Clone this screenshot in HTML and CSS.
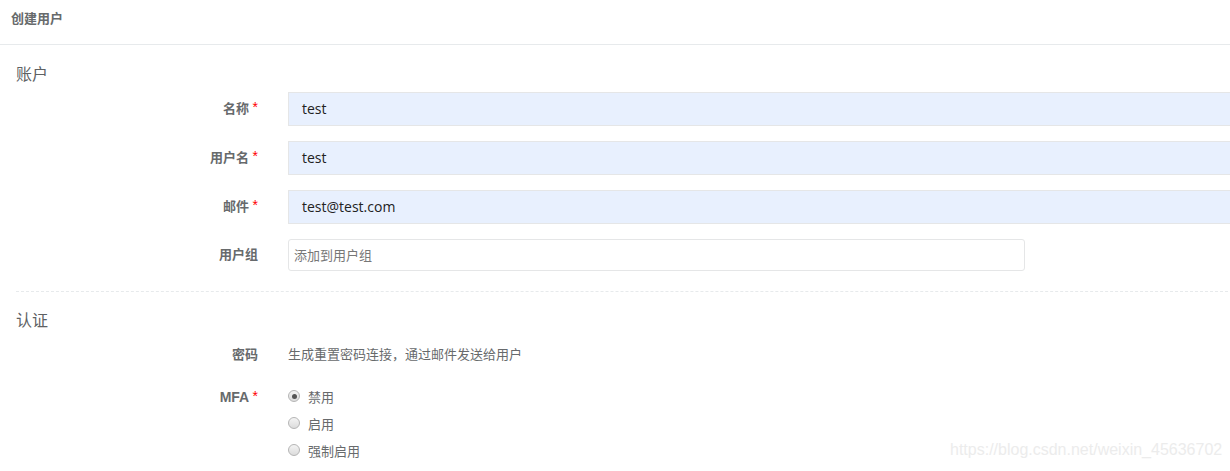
FILE: index.html
```html
<!DOCTYPE html>
<html lang="zh">
<head>
<meta charset="utf-8">
<title>创建用户</title>
<link rel="stylesheet" href="styles.css">
</head>
<body>
<div class="page">
  <div class="title-bar">创建用户</div>
  <div class="content">
    <div class="section-title">账户</div>
    <div class="row">
      <label class="lbl">名称 <span class="req">*</span></label>
      <div class="field"><div class="input filled">test</div></div>
    </div>
    <div class="row">
      <label class="lbl">用户名 <span class="req">*</span></label>
      <div class="field"><div class="input filled">test</div></div>
    </div>
    <div class="row">
      <label class="lbl">邮件 <span class="req">*</span></label>
      <div class="field"><div class="input filled">test@test.com</div></div>
    </div>
    <div class="row">
      <label class="lbl">用户组</label>
      <div class="field"><div class="input select">添加到用户组</div></div>
    </div>
    <div class="divider"></div>
    <div class="section-title second">认证</div>
    <div class="row text-row">
      <label class="lbl">密码</label>
      <div class="field plain">生成重置密码连接，通过邮件发送给用户</div>
    </div>
    <div class="row radio-row">
      <label class="lbl">MFA <span class="req">*</span></label>
      <div class="field radios">
        <div class="radio"><span class="dot checked"></span>禁用</div>
        <div class="radio"><span class="dot"></span>启用</div>
        <div class="radio"><span class="dot"></span>强制启用</div>
      </div>
    </div>
  </div>
  <div class="watermark">https://blog.csdn.net/weixin_45636702</div>
</div>
</body>
</html>
```
FILE: styles.css
```css
html, body {
  margin: 0;
  padding: 0;
  background: #fff;
}
.page {
  position: relative;
  width: 1230px;
  height: 471px;
  overflow: hidden;
  font-family: "Noto Sans CJK SC", "Liberation Sans", sans-serif;
  color: #676a6c;
  font-size: 13px;
}
.title-bar {
  height: 45px;
  line-height: 36px;
  padding-left: 11px;
  font-size: 13px;
  font-weight: bold;
  border-bottom: 1px solid #e7eaec;
  box-sizing: border-box;
}
.content {
  padding-left: 16px;
}
.section-title {
  font-size: 16px;
  color: #5e6163;
  line-height: 20px;
  padding-top: 18px;
  margin-bottom: 9px;
}
.section-title.second {
  padding-top: 17px;
  margin-bottom: 15px;
}
.row {
  display: grid;
  grid-template-columns: 242px 1fr;
  column-gap: 30px;
  align-items: center;
  margin-bottom: 15px;
}
.lbl {
  text-align: right;
  font-weight: bold;
  font-size: 13px;
  font-family: "Liberation Sans", "Noto Sans CJK SC", sans-serif;
  padding-bottom: 4px;
}
.req {
  color: #f00;
  font-weight: normal;
  font-size: 14px;
  vertical-align: 1px;
}
.input {
  box-sizing: border-box;
  height: 34px;
  line-height: 32px;
  border: 1px solid #e5e6e7;
  padding-left: 13px;
  font-family: "Open Sans", "Noto Sans CJK SC", sans-serif;
  font-size: 14px;
  color: #222;
}
.input.filled {
  background: #e8f0fe;
  margin-right: -4px;
}
.input.select {
  height: 32px;
  line-height: 30px;
  width: 737px;
  border-radius: 3px;
  padding-left: 5px;
  font-family: "Noto Sans CJK SC", sans-serif;
  font-size: 13px;
  color: #777;
}
.divider {
  border-top: 1px dashed #e7eaec;
  margin-top: 20px;
  margin-right: 2px;
}
.text-row {
  margin-bottom: 24px;
}
.text-row .lbl {
  padding-bottom: 0;
}
.plain {
  font-size: 13px;
  color: #676a6c;
}
.radio-row {
  align-items: start;
}
.radio-row .lbl {
  line-height: 18px;
  padding-top: 0;
  padding-bottom: 0;
  font-size: 14px;
}
.radios {
  display: flex;
  flex-direction: column;
  gap: 9px;
}
.radio {
  display: flex;
  align-items: center;
  height: 18px;
  font-size: 13px;
}
.dot {
  box-sizing: border-box;
  width: 12px;
  height: 12px;
  border-radius: 50%;
  border: 1px solid #b5b5b5;
  background: linear-gradient(#f4f4f4, #dcdcdc);
  margin-right: 8px;
  position: relative;
}
.dot.checked::after {
  content: "";
  position: absolute;
  left: 2.5px;
  top: 2.5px;
  width: 5px;
  height: 5px;
  border-radius: 50%;
  background: #555;
}
.watermark {
  position: absolute;
  left: 950px;
  top: 441px;
  font-family: "Liberation Sans", sans-serif;
  font-size: 16px;
  color: #ececec;
}
```
